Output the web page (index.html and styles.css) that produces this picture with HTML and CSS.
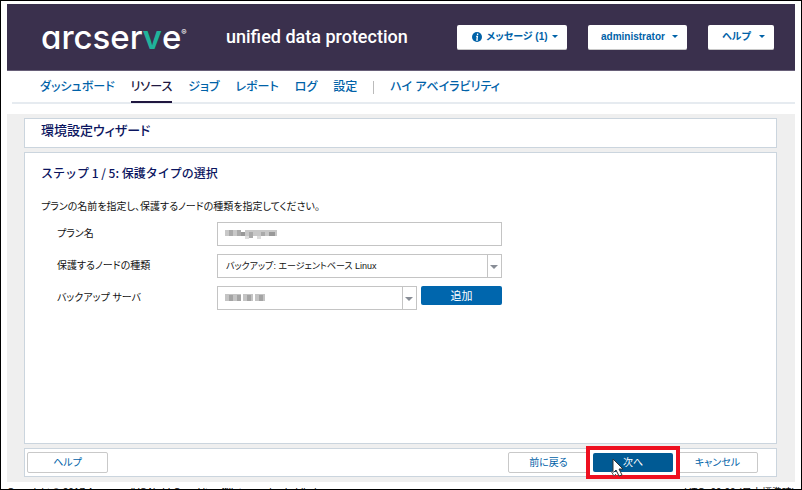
FILE: index.html
```html
<!DOCTYPE html>
<html lang="ja">
<head>
<meta charset="utf-8">
<title>arcserve unified data protection</title>
<link rel="stylesheet" href="styles.css">
</head>
<body>
<div class="frame">
  <header class="banner">
    <div class="logo">arcser<span class="logo-v">v</span>e<sup class="logo-mark">®</sup></div>
    <div class="product">unified data protection</div>
    <div class="menus">
      <button class="menu" type="button"><svg class="info" viewBox="0 0 10 10" aria-hidden="true"><circle cx="5" cy="5" r="5" fill="#0062a8"/><path d="M5.6 1.6v1.4M4.2 4.3h1.2L4.9 8h.9" fill="none" stroke="#fff" stroke-width="1.3"/></svg>メッセージ (1)<span class="caret"></span></button>
      <button class="menu menu-user" type="button">administrator<span class="caret"></span></button>
      <button class="menu menu-help" type="button">ヘルプ<span class="caret"></span></button>
    </div>
  </header>
  <nav class="tabs">
    <a href="#">ダッシュボード</a>
    <a href="#" class="active">リソース</a>
    <a href="#">ジョブ</a>
    <a href="#">レポート</a>
    <a href="#">ログ</a>
    <a href="#">設定</a>
    <span class="divider"></span>
    <a href="#">ハイ アベイラビリティ</a>
  </nav>
  <main class="workspace">
    <section class="panel title"><h1>環境設定ウィザード</h1></section>
    <section class="panel step">
      <h2>ステップ 1 / 5: 保護タイプの選択</h2>
      <p>プランの名前を指定し、保護するノードの種類を指定してください。</p>
      <form class="fields">
        <label for="plan">プラン名</label>
        <div class="field"><input id="plan" type="text">
          <svg class="mosaic" viewBox="0 0 56 12" aria-hidden="true"><path fill="#c8c8c8" d="M0 2h16v6H0zM20 2h32v6H20z"/><path fill="#aaa" d="M4 2h4v6H4zM12 2h4v6h-4zM24 4h4v6h-4zM36 4h4v4h-4z"/><path fill="#999" d="M16 4h4v4h-4zM44 4h6v4h-6z"/><path fill="#ddd" d="M20 8h4v3h-4zM32 8h4v3h-4z"/></svg>
        </div>
        <label for="kind">保護するノードの種類</label>
        <div class="field select"><select id="kind"><option>バックアップ: エージェントベース Linux</option></select></div>
        <label for="server">バックアップ サーバ</label>
        <div class="row">
          <div class="field select"><select id="server"><option></option></select>
            <svg class="mosaic" viewBox="0 0 56 12" aria-hidden="true"><path fill="#c4c4c4" d="M0 2h16v7H0zM18 2h10v7H18zM30 2h10v7H30z"/><path fill="#a4a4a4" d="M4 3h4v6H4zM12 3h4v6h-4zM22 3h4v6h-4zM34 3h4v6h-4z"/></svg>
          </div>
          <button class="add" type="button">追加</button>
        </div>
      </form>
    </section>
    <section class="panel actions">
      <button type="button" class="plain">ヘルプ</button>
      <span class="spacer"></span>
      <button type="button" class="plain">前に戻る</button>
      <div class="highlight"><button type="button" class="next">次へ</button>
        <svg class="cursor" viewBox="0 0 14 19" aria-hidden="true"><path d="M3 1v14l3-3 3 6 3-1-3-6h4z" fill="#fff" stroke="#333"/><path d="M1 13l3 5 2-2" fill="#fff" stroke="#555"/></svg>
      </div>
      <button type="button" class="plain">キャンセル</button>
    </section>
  </main>
  <footer class="legal"><span>Copyright © 2017 Arcserve (USA), LLC and its affiliates and subsidiaries.</span><span>UTC+09:00 (日本標準時)</span></footer>
</div>
</body>
</html>
```
FILE: styles.css
```css
* { box-sizing: border-box; }
body { margin: 0; font: 12px/16px "Liberation Sans", "Noto Sans CJK JP", sans-serif; font-feature-settings: "palt"; color: #111; background: #fff; }
button, input, select { font: inherit; font-feature-settings: inherit; margin: 0; }
h1, h2, p { margin: 0; }
.frame { height: 100vh; overflow: hidden; border: 1px solid #000; padding: 3px 6px 0; display: flex; flex-direction: column; }
.banner { flex: none; height: 67px; display: flex; align-items: center; padding: 0 21px 0 34px; background: #3a304d; border-bottom: 1px solid #675f78; color: #fff; }
.logo { width: 185px; font: 500 33px/40px Inter, sans-serif; font-feature-settings: "cv11"; white-space: nowrap; }
.logo-v { color: #20b39b; font-weight: 600; }
.logo-mark { font-size: 8px; line-height: 8px; vertical-align: 14px; }
.product { font: 18px/24px Roboto, sans-serif; font-weight: 500; white-space: nowrap; }
.menus { margin-left: auto; display: flex; gap: 21px; }
.menu { display: flex; align-items: center; justify-content: space-between; width: 110px; height: 25px; padding: 0 9px 0 15px; border: 0; border-bottom: 1px solid #c8c8c8; border-radius: 2px; background: #fff; color: #0062a8; font-weight: bold; font-size: 10px; white-space: nowrap; }
.menu-user { width: 99px; padding-left: 13px; }
.menu-help { width: 66px; padding-left: 14px; }
.info { width: 10px; height: 10px; }
.caret { border: 3px solid transparent; border-top-color: #0062a8; border-bottom: 0; }
.tabs { flex: none; display: flex; height: 33px; margin-left: 5px; padding-left: 28px; border-bottom: 2px solid #e6ebf0; font-size: 12px; line-height: 32px; gap: 16px; white-space: nowrap; }
.tabs a { height: 32px; color: #0062a8; font-weight: 500; text-decoration: none; }
.tabs .active { color: #201740; border-bottom: 2px solid #201740; }
.divider { width: 1px; height: 13px; margin-top: 10px; background: #bbb; }
.workspace { flex: none; margin-top: 10px; padding: 4px 18px 5px 17px; background: #efefef; display: flex; flex-direction: column; gap: 4px; }
.panel { background: #fff; border: 1px solid #cbd5de; }
.title { height: 30px; padding: 0 16px; }
h1 { font-size: 13px; line-height: 24px; font-weight: 500; color: #0b1560; }
.step { height: 292px; padding: 11px 16px; }
h2 { font: 500 12px/18px "Noto Sans CJK JP", sans-serif; color: #0b1560; }
p { margin-top: 17px; font-size: 10px; }
.fields { display: grid; grid-template-columns: 160px 285px; row-gap: 8px; margin: 7px 0 0 16px; font-size: 10px; align-items: center; }
.field { position: relative; height: 24px; }
.field input, .field select { width: 100%; height: 24px; padding: 0 8px; border: 1px solid #c4c4c4; border-radius: 0; background: #fff; color: #111; appearance: none; display: block; }
.field select { font-size: 9px; }
.select::before { content: ""; position: absolute; right: 14px; top: 1px; height: 22px; border-left: 1px solid #c4c4c4; }
.select::after { content: ""; position: absolute; right: 4px; top: 11px; border: 4px solid transparent; border-top-color: #888d96; border-bottom: 0; }
.row { display: flex; gap: 4px; align-items: flex-start; }
.row .field { flex: 1; }
.mosaic { position: absolute; left: 8px; top: 6px; width: 56px; height: 12px; }
.add { width: 81px; height: 19px; padding: 0; border: 0; border-radius: 2px; background: #0066ad; color: #fff; font-size: 11px; }
.actions { height: 29px; display: flex; align-items: center; padding: 0 18px 0 2px; font-size: 10px; }
.plain { width: 81px; height: 21px; padding: 0; border: 1px solid #c9c9c9; border-radius: 2px; background: #fff; color: #0062a8; }
.spacer { flex: 1; }
.highlight { position: relative; z-index: 1; flex: none; margin: 0 -3px; border: 4px solid #ee1020; padding: 3px; background: #fff; }
.next { display: block; width: 80px; height: 19px; padding: 0; border: 0; border-radius: 2px; background: #005a94; color: #fff; }
.cursor { position: absolute; left: 20px; top: 8px; width: 14px; height: 19px; }
.legal { flex: none; display: flex; justify-content: space-between; margin-top: 3px; font-size: 10px; white-space: nowrap; }
```
